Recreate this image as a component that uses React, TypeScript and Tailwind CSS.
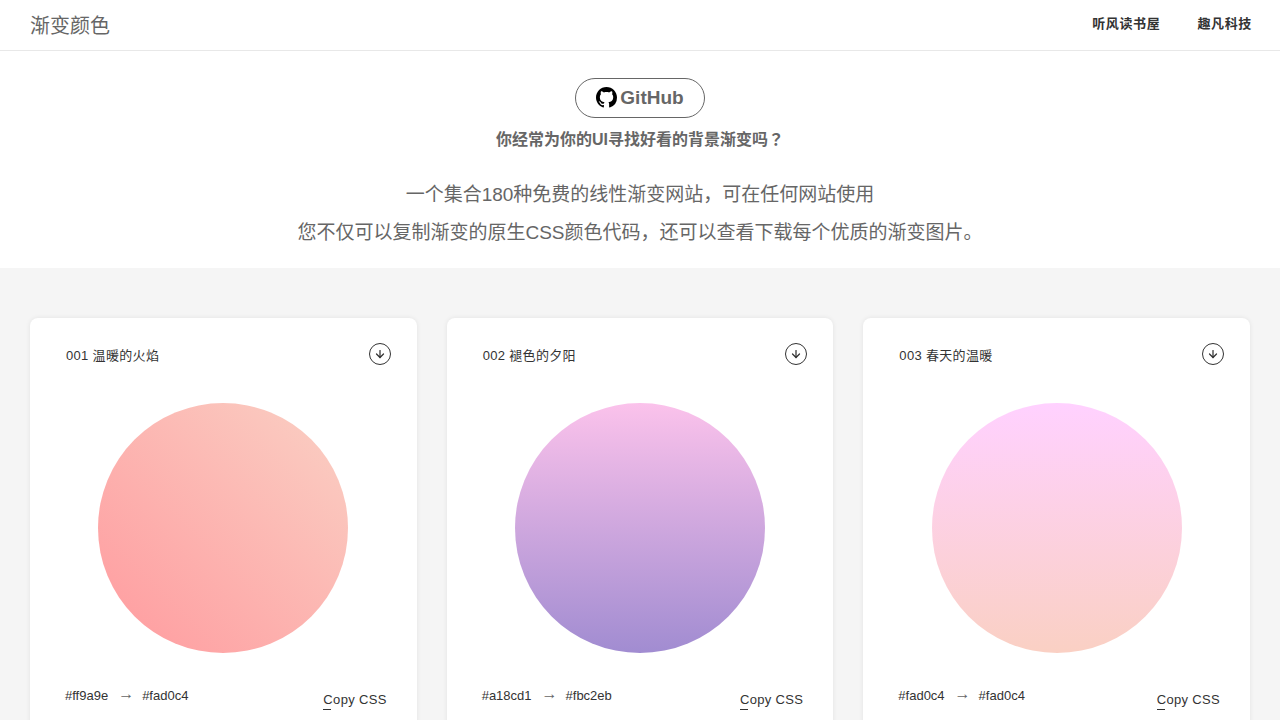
import { ArrowDown } from "lucide-react";

type Gradient = {
  id: string;
  name: string;
  from: string;
  to: string;
  background: string;
};

const gradients: Gradient[] = [
  {
    id: "001",
    name: "温暖的火焰",
    from: "#ff9a9e",
    to: "#fad0c4",
    background: "linear-gradient(45deg, #ff9a9e 0%, #fad0c4 99%, #fad0c4 100%)",
  },
  {
    id: "002",
    name: "褪色的夕阳",
    from: "#a18cd1",
    to: "#fbc2eb",
    background: "linear-gradient(to top, #a18cd1 0%, #fbc2eb 100%)",
  },
  {
    id: "003",
    name: "春天的温暖",
    from: "#fad0c4",
    to: "#fad0c4",
    background: "linear-gradient(to top, #fad0c4 0%, #fad0c4 1%, #ffd1ff 100%)",
  },
];

const links = ["听风读书屋", "趣凡科技"];

function GitHubMark() {
  return (
    <svg viewBox="0 0 16 16" className="mb-[2px] h-[21px] w-[21px] text-black" fill="currentColor" aria-hidden="true">
      <path d="M8 0C3.58 0 0 3.58 0 8c0 3.54 2.29 6.53 5.47 7.59.4.07.55-.17.55-.38 0-.19-.01-.82-.01-1.49-2.01.37-2.53-.49-2.69-.94-.09-.23-.48-.94-.82-1.13-.28-.15-.68-.52-.01-.53.63-.01 1.08.58 1.23.82.72 1.21 1.87.87 2.33.66.07-.52.28-.87.51-1.07-1.78-.2-3.64-.89-3.64-3.95 0-.87.31-1.59.82-2.15-.08-.2-.36-1.02.08-2.12 0 0 .67-.21 2.2.82.64-.18 1.32-.27 2-.27s1.36.09 2 .27c1.53-1.04 2.2-.82 2.2-.82.44 1.1.16 1.92.08 2.12.51.56.82 1.27.82 2.15 0 3.07-1.87 3.75-3.65 3.95.29.25.54.73.54 1.48 0 1.07-.01 1.93-.01 2.2 0 .21.15.46.55.38A8.01 8.01 0 0 0 16 8c0-4.42-3.58-8-8-8z" />
    </svg>
  );
}

function Header() {
  return (
    <header className="flex h-[51px] items-center justify-between border-b border-[#e8e8e8] pt-[2px] pr-7 pl-[30px]">
      <a href="#" className="text-xl">
        渐变颜色
      </a>
      <nav className="flex gap-[37px] pb-1 text-[13px] font-bold tracking-wider text-[#333]">
        {links.map((link) => (
          <a key={link} href="#">
            {link}
          </a>
        ))}
      </nav>
    </header>
  );
}

function Hero() {
  return (
    <section className="flex flex-col items-center px-[30px] pt-[27px] pb-4 text-center">
      <a
        href="#"
        className="flex h-10 items-center gap-[3px] rounded-full border border-[#666] px-5 text-[19px] font-bold"
      >
        <GitHubMark />
        GitHub
      </a>
      <h1 className="mt-2 text-base leading-6 font-bold">
        你经常为你的UI寻找好看的背景渐变吗<span className="font-['Noto_Sans_CJK_TC',sans-serif]">？</span>
      </h1>
      <p className="mt-6 text-[19px] leading-[38px]">
        一个集合180种免费的线性渐变网站，可在任何网站使用
        <br />
        您不仅可以复制渐变的原生CSS颜色代码，还可以查看下载每个优质的渐变图片。
      </p>
    </section>
  );
}

function GradientCard({ gradient }: { gradient: Gradient }) {
  return (
    <article className="rounded-lg bg-white px-[26px] pt-[25px] pb-10 text-[13px] text-[#333] shadow-[0_0_5px_rgba(0,0,0,0.08)]">
      <div className="flex items-start justify-between pl-[10px]">
        <h2 className="pt-[3px] leading-5 tracking-wide">
          {gradient.id} {gradient.name}
        </h2>
        <button
          type="button"
          aria-label={`下载 ${gradient.name}`}
          className="flex h-[22px] w-[22px] items-center justify-center rounded-full border border-[#333]"
        >
          <ArrowDown size={12} strokeWidth={2.5} />
        </button>
      </div>
      <div
        className="mx-auto mt-[37px] h-[250px] w-[250px] rounded-full"
        style={{ background: gradient.background }}
      />
      <div className="mt-[33px] flex items-start justify-between pr-1 pl-[9px]">
        <div className="flex items-start leading-5">
          <span>{gradient.from}</span>
          <span className="mr-2 ml-[10px] text-base leading-4 text-[#666]">→</span>
          <span>{gradient.to}</span>
        </div>
        <button type="button" className="relative mt-1 leading-5 tracking-wide">
          Copy CSS
          <span className="absolute bottom-0 left-0 h-px w-2 bg-[#333]" />
        </button>
      </div>
    </article>
  );
}

export default function App() {
  return (
    <div className="min-h-screen bg-white font-['Liberation_Sans','Noto_Sans_CJK_SC',sans-serif] text-[#666]">
      <Header />
      <Hero />
      <main className="grid grid-cols-3 gap-[30px] bg-[#f5f5f5] px-[30px] py-[50px]">
        {gradients.map((gradient) => (
          <GradientCard key={gradient.id} gradient={gradient} />
        ))}
      </main>
    </div>
  );
}
